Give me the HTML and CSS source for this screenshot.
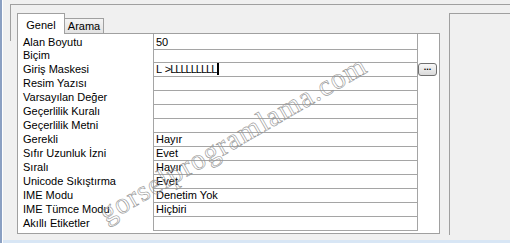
FILE: index.html
```html
<!DOCTYPE html>
<html lang="tr">

<head>
    <meta charset="UTF-8">
    <meta name="viewport" content="width=device-width, initial-scale=1.0">
    <title>Alan Özellikleri</title>
    <link rel="stylesheet" href="styles.css">
</head>

<body>
    <div id="window">
        <div id="frame">
            <div id="tabs">
                <div class="strip">
                    <div class="tab active">Genel</div>
                    <div class="tab">Arama</div>
                </div>
                <div class="panel">
                    <div class="row">
                        <div class="label">Alan Boyutu</div>
                        <div class="value">50</div>
                        <div class="extra"></div>
                    </div>
                    <div class="row">
                        <div class="label">Biçim</div>
                        <div class="value"></div>
                        <div class="extra"></div>
                    </div>
                    <div class="row">
                        <div class="label">Giriş Maskesi</div>
                        <div class="value"><span class="mask">L &gt;LLLLLLLLL</span><span class="caret"></span></div>
                        <div class="extra"><div class="dots">...</div></div>
                    </div>
                    <div class="row">
                        <div class="label">Resim Yazısı</div>
                        <div class="value"></div>
                        <div class="extra"></div>
                    </div>
                    <div class="row">
                        <div class="label">Varsayılan Değer</div>
                        <div class="value"></div>
                        <div class="extra"></div>
                    </div>
                    <div class="row">
                        <div class="label">Geçerlilik Kuralı</div>
                        <div class="value"></div>
                        <div class="extra"></div>
                    </div>
                    <div class="row">
                        <div class="label">Geçerlilik Metni</div>
                        <div class="value"></div>
                        <div class="extra"></div>
                    </div>
                    <div class="row">
                        <div class="label">Gerekli</div>
                        <div class="value">Hayır</div>
                        <div class="extra"></div>
                    </div>
                    <div class="row">
                        <div class="label">Sıfır Uzunluk İzni</div>
                        <div class="value">Evet</div>
                        <div class="extra"></div>
                    </div>
                    <div class="row">
                        <div class="label">Sıralı</div>
                        <div class="value">Hayır</div>
                        <div class="extra"></div>
                    </div>
                    <div class="row">
                        <div class="label">Unicode Sıkıştırma</div>
                        <div class="value">Evet</div>
                        <div class="extra"></div>
                    </div>
                    <div class="row">
                        <div class="label">IME Modu</div>
                        <div class="value">Denetim Yok</div>
                        <div class="extra"></div>
                    </div>
                    <div class="row">
                        <div class="label">IME Tümce Modu</div>
                        <div class="value">Hiçbiri</div>
                        <div class="extra"></div>
                    </div>
                    <div class="row">
                        <div class="label">Akıllı Etiketler</div>
                        <div class="value"></div>
                        <div class="extra"></div>
                    </div>
                </div>
            </div>
            <div id="side"></div>
        </div>
        <span id="watermark">gorselprogramlama.com</span>
    </div>
</body>

</html>
```

FILE: styles.css
```css
* {
    margin: 0;
    padding: 0;
    box-sizing: border-box;
}

body {
    width: 510px;
    height: 243px;
    overflow: hidden;
    background-color: #f0f0f0;
    font: 11px "Liberation Sans", Tahoma, sans-serif;
    color: #000;
}

#window {
    position: relative;
    height: 243px;
    padding-top: 4px;
    box-shadow: inset 2px 0 #8ba0c2, inset 3px 0 #fff, inset 0 -3px #d8e6f5;
}

#frame {
    margin-left: 10px;
    padding: 8px 0 0 7px;
    border-top: 1px solid #a0a0a0;
    display: flex;
    align-items: flex-start;
    background: linear-gradient(#a0a0a0, #a0a0a0) left top / 1px 36px no-repeat;
}

#tabs {
    width: 423px;
}

.strip {
    height: 20px;
    display: flex;
    align-items: flex-end;
}

.tab {
    height: 15px;
    width: 39px;
    padding-top: 1px;
    text-align: center;
    line-height: 13px;
    border: 1px solid #a0a0a0;
    border-bottom: none;
    border-left: none;
    background: linear-gradient(#f4f4f4, #e2e2e2);
}

.tab.active {
    position: relative;
    z-index: 1;
    height: 21px;
    width: 48px;
    margin-bottom: -1px;
    padding-top: 5px;
    border-left: 1px solid #a0a0a0;
    background: #fff;
}

.panel {
    height: 201px;
    border: 1px solid #a0a0a0;
    background-color: #fff;
    display: flex;
    flex-direction: column;
}

.row {
    height: 14px;
    display: grid;
    grid-template-columns: 135px 265px 21px;
    line-height: 13px;
}

.row:first-child {
    height: 15px;
}

.row:first-child .label,
.row:first-child .value {
    padding-top: 2px;
}

.label {
    padding-left: 5px;
    white-space: nowrap;
}

.value {
    padding-left: 2px;
    border: 1px solid #a5a5a5;
    border-top: none;
    white-space: nowrap;
    display: flex;
    align-items: flex-start;
}

.mask {
    letter-spacing: -1px;
    word-spacing: 2px;
}

.caret {
    width: 2px;
    height: 12px;
    margin-left: 1px;
    background-color: #000;
}

.dots {
    width: 19px;
    height: 13px;
    border: 1px solid #707070;
    border-radius: 3px;
    background: linear-gradient(#f8f8f8, #dadada);
    font-weight: bold;
    font-size: 9px;
    line-height: 7px;
    text-align: center;
}

#side {
    flex: 1;
    height: 222px;
    margin-left: 9px;
    border-top: 1px solid #a0a0a0;
    border-left: 1px solid #a0a0a0;
}

#watermark {
    position: absolute;
    left: 233px;
    top: 139px;
    transform: translate(-50%, -50%) rotate(-30deg);
    font: 29px "Liberation Serif", serif;
    letter-spacing: 1px;
    color: transparent;
    -webkit-text-stroke: 0.6px #959595;
    white-space: nowrap;
    pointer-events: none;
}
```
